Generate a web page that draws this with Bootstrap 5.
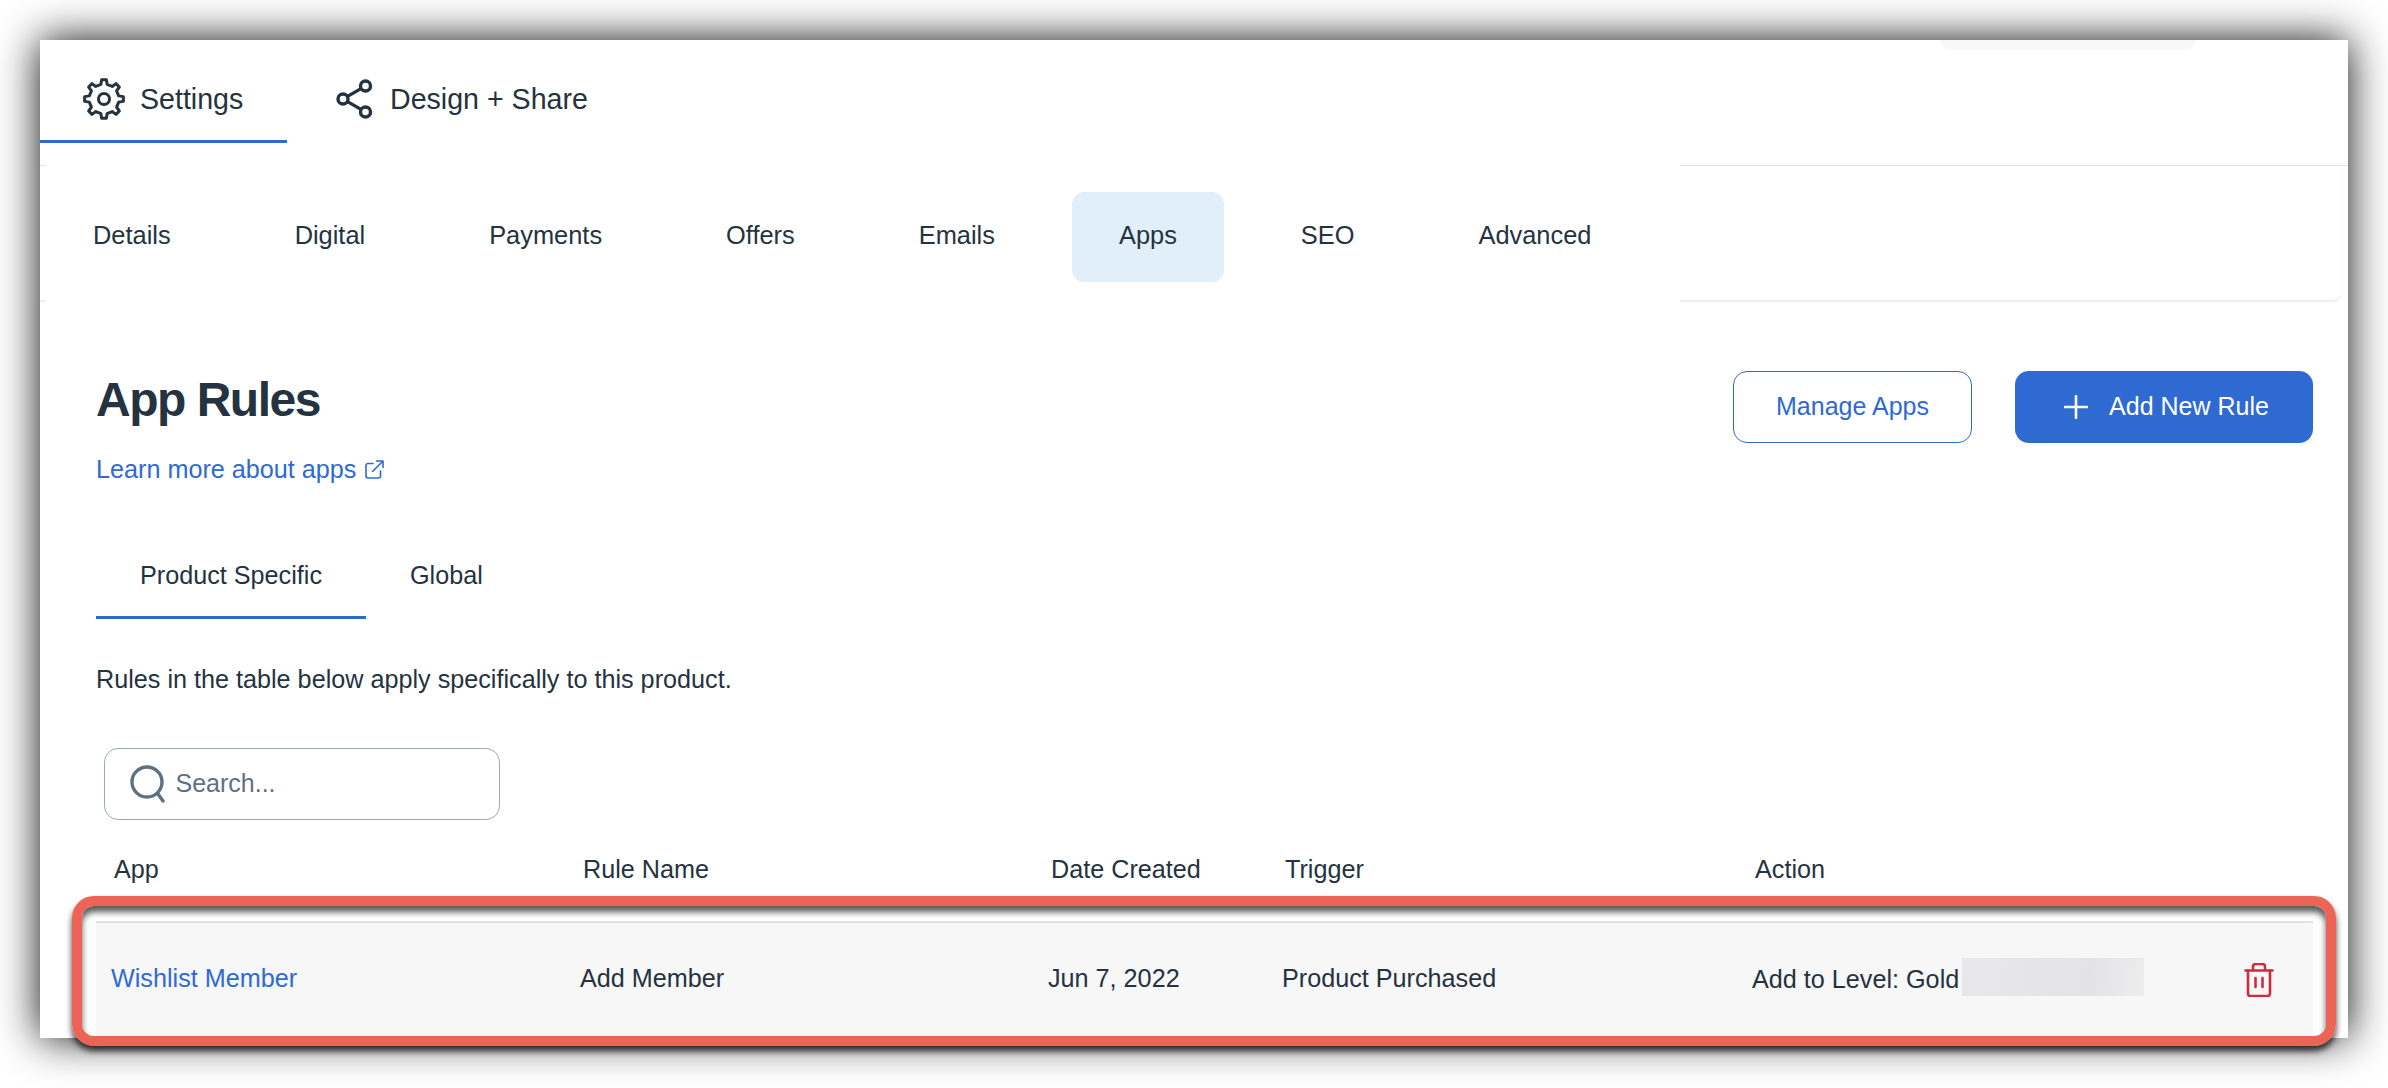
<!DOCTYPE html>
<html lang="en">
<head>
  <meta charset="UTF-8" />
  <title>App Rules</title>
  <link href="https://cdn.jsdelivr.net/npm/bootstrap@5.3.0/dist/css/bootstrap.min.css" rel="stylesheet">
  <style>
    html, body {
      height: 1088px;
      overflow: hidden;
      background: #fff;
    }

    body {
      font-family: "Liberation Sans", Arial, sans-serif;
      font-size: 25.2px;
      color: #25323f;
    }

    a {
      color: #2f69d2;
      text-decoration: none;
    }

    .app-window {
      position: relative;
      width: 2308px;
      height: 998px;
      margin: 40px;
      background: #fff;
      box-shadow: 0 0 40px rgba(0, 0, 0, 0.95);
    }

    .peek-menu {
      position: absolute;
      top: 0;
      left: 1900px;
      width: 256px;
      height: 10px;
      background: #f7f8f9;
      border-radius: 0 0 12px 12px;
    }

    .top-tabs {
      height: 126px;
      border-bottom: 1px solid #e2e4e8;
    }

    .top-tab {
      height: 103px;
      padding-top: 17px;
      font-size: 28.6px;
      color: #25323f;
      border-bottom: 3px solid transparent;
    }

    .top-tab span {
      padding-top: 2px;
    }

    .top-tab.is-active {
      width: 247px;
      padding-left: 43px;
      gap: 15px;
      border-bottom-color: #2f69d2;
    }

    .top-tab.is-plain {
      margin-left: 49px;
      gap: 17px;
    }

    .sub-card {
      height: 135px;
      margin-right: 6px;
      border-bottom-right-radius: 10px;
      box-shadow: 0 2px 2px rgba(0, 0, 0, 0.08);
    }

    .sub-tabs {
      position: relative;
      width: 1634px;
      height: 150px;
      margin: -1px 0 0 6px;
      padding-top: 27px;
      gap: 30px;
      background: #fff;
    }

    .sub-link {
      height: 90px;
      padding: 0 47px 4px;
      font-size: 25.4px;
      line-height: 86px;
      color: #25323f;
      border-radius: 12px;
    }

    .sub-link.is-active {
      background: #e1effb;
    }

    .main-pane {
      padding: 71px 35px 0 56px;
    }

    .page-title {
      margin: 0;
      font-family: "Liberation Sans", Arial, sans-serif;
      font-size: 48px;
      font-weight: 700;
      line-height: 58px;
      letter-spacing: -1.5px;
    }

    .learn-link {
      display: inline-flex;
      align-items: center;
      gap: 9px;
      margin-top: 24px;
      line-height: 32px;
    }

    .act-btn {
      height: 72px;
      padding: 0;
      font-size: 25px;
      border-radius: 14px;
    }

    .btn-manage {
      width: 239px;
      color: #2f69d2;
      background: #fff;
      border: 1.5px solid #2f69d2;
    }

    .btn-add {
      width: 298px;
      margin-left: 43px;
      padding-left: 5px;
      gap: 21px;
      color: #fff;
      background: #2f69d2;
      border: 0;
    }

    .scope-tabs {
      margin-top: 70px;
    }

    .scope-tab {
      padding: 0 44px 25px;
      line-height: 32px;
      color: #25323f;
      border-bottom: 3px solid transparent;
    }

    .scope-tab.is-active {
      border-bottom-color: #2f69d2;
    }

    .scope-note {
      margin: 44px 0 0;
      line-height: 32px;
    }

    .search-box {
      width: 396px;
      height: 72px;
      margin: 53px 0 0 7.500px;
      padding-left: 25px;
      gap: 9px;
      border: 1.5px solid #9aa9b7;
      border-radius: 14px;
    }

    .search-input {
      width: 300px;
      padding: 0;
      font-size: 25px;
      border: 0;
      outline: 0;
      color: #25323f;
    }

    .search-input::placeholder {
      color: #5f7080;
      opacity: 1;
    }

    .rule-table {
      width: 2217px;
      margin: 0;
      table-layout: fixed;
      --bs-table-color: #25323f;
      color: #25323f;
    }

    .rule-table th {
      height: 102px;
      padding: 0 0 1px 18px;
      font-weight: 400;
      vertical-align: middle;
      border: 0;
      background: transparent;
    }

    .rule-table td {
      height: 115px;
      padding: 0 0 2px 15px;
      vertical-align: middle;
      background: #f7f7f8;
      border: 0;
      border-top: 2px solid #e2e3e6;
    }

    .rule-table td.trash-cell {
      padding-left: 43px;
    }

    .blur-patch {
      display: inline-block;
      width: 182px;
      height: 38px;
      margin-left: 3px;
      vertical-align: -8px;
      background: linear-gradient(100deg, #e8e7e9, #e3e2e4 70%, #eeedee);
    }

    .callout-frame {
      position: absolute;
      left: 32px;
      top: 856px;
      width: 2264px;
      height: 150px;
      border: 10px solid #ec6455;
      border-radius: 22px;
      box-shadow: 0 5px 6px rgba(0, 0, 0, 0.75), inset 0 6px 6px rgba(0, 0, 0, 0.65);
      pointer-events: none;
    }
  </style>
</head>
<body>
  <div class="app-window">
    <div class="peek-menu"></div>

    <div class="top-tabs d-flex align-items-start">
      <a href="#" class="top-tab is-active d-flex align-items-center">
        <svg width="42" height="42" viewBox="0 0 42 42" fill="none" stroke="#25323f" stroke-width="3" stroke-linejoin="round">
          <polygon points="17.88,6.33 18.62,1.65 23.38,1.65 24.12,6.33 29.17,8.42 33,5.63 36.37,9 33.58,12.83 35.67,17.88 40.35,18.62 40.35,23.38 35.67,24.12 33.58,29.17 36.37,33 33,36.37 29.17,33.58 24.12,35.67 23.38,40.35 18.62,40.35 17.88,35.67 12.83,33.58 9,36.37 5.63,33 8.42,29.17 6.33,24.12 1.65,23.38 1.65,18.62 6.33,17.88 8.42,12.83 5.63,9 9,5.63 12.83,8.42"/>
          <circle cx="21" cy="21" r="5.5"/>
        </svg>
        <span>Settings</span>
      </a>
      <a href="#" class="top-tab is-plain d-flex align-items-center">
        <svg width="37" height="40" viewBox="0 0 37 40" fill="none" stroke="#25323f" stroke-width="3.4">
          <circle cx="7" cy="20" r="5"/>
          <circle cx="29.5" cy="7" r="5"/>
          <circle cx="29.5" cy="33" r="5"/>
          <path d="M11.5 17.4 25 9.6M11.5 22.6 25 30.4"/>
        </svg>
        <span>Design + Share</span>
      </a>
    </div>

    <div class="sub-card">
      <nav class="sub-tabs d-flex align-items-start">
        <a href="#" class="sub-link">Details</a>
        <a href="#" class="sub-link">Digital</a>
        <a href="#" class="sub-link">Payments</a>
        <a href="#" class="sub-link">Offers</a>
        <a href="#" class="sub-link">Emails</a>
        <a href="#" class="sub-link is-active">Apps</a>
        <a href="#" class="sub-link">SEO</a>
        <a href="#" class="sub-link">Advanced</a>
      </nav>
    </div>

    <div class="main-pane">
      <div class="d-flex justify-content-between align-items-start">
        <div>
          <h1 class="page-title">App Rules</h1>
          <a href="#" class="learn-link">
            <span>Learn more about apps</span>
            <svg width="19" height="19" viewBox="0 0 19 19" fill="none" stroke="#2f69d2" stroke-width="1.6" stroke-linecap="round" stroke-linejoin="round">
              <path d="M8 3.5H3A2 2 0 0 0 1 5.500V16A2 2 0 0 0 3 18H13.500A2 2 0 0 0 15.500 16V11"/>
              <path d="M7.500 11.500 17.500 1.500M11.500 1H18V7.500"/>
            </svg>
          </a>
        </div>
        <div class="d-flex">
          <button type="button" class="act-btn btn-manage">Manage Apps</button>
          <button type="button" class="act-btn btn-add d-flex align-items-center justify-content-center">
            <svg width="24" height="24" viewBox="0 0 24 24" fill="none" stroke="#fff" stroke-width="2.6" stroke-linecap="round">
              <path d="M12 1V23M1 12H23"/>
            </svg>
            <span>Add New Rule</span>
          </button>
        </div>
      </div>

      <div class="scope-tabs d-flex">
        <a href="#" class="scope-tab is-active">Product Specific</a>
        <a href="#" class="scope-tab">Global</a>
      </div>

      <p class="scope-note">Rules in the table below apply specifically to this product.</p>

      <div class="search-box d-flex align-items-center">
        <svg width="37" height="38" viewBox="0 0 37 38" fill="none" stroke="#5f7080" stroke-width="3.4" stroke-linecap="round">
          <circle cx="17" cy="17" r="15"/>
          <path d="M28 29 33 36"/>
        </svg>
        <input type="text" class="search-input" placeholder="Search...">
      </div>

      <table class="table rule-table">
        <colgroup>
          <col style="width: 469px">
          <col style="width: 468px">
          <col style="width: 234px">
          <col style="width: 470px">
          <col>
          <col style="width: 112px">
        </colgroup>
        <thead>
          <tr>
            <th>App</th>
            <th>Rule Name</th>
            <th>Date Created</th>
            <th>Trigger</th>
            <th>Action</th>
            <th></th>
          </tr>
        </thead>
        <tbody>
          <tr>
            <td><a href="#">Wishlist Member</a></td>
            <td>Add Member</td>
            <td>Jun 7, 2022</td>
            <td>Product Purchased</td>
            <td>Add to Level: Gold<span class="blur-patch"></span></td>
            <td class="trash-cell">
              <svg width="30" height="34" viewBox="0 0 30 34" fill="none" stroke="#cd2c40" stroke-width="2.6" stroke-linecap="round" stroke-linejoin="round">
                <path d="M1.500 7.500H28.500"/>
                <path d="M9 7V3.500A2.500 2.500 0 0 1 11.500 1H18.500A2.500 2.500 0 0 1 21 3.500V7"/>
                <path d="M4 7.500V30.500A2.500 2.500 0 0 0 6.500 33H23.500A2.500 2.500 0 0 0 26 30.500V7.500"/>
                <path d="M11.500 15V24M18.500 15V24"/>
              </svg>
            </td>
          </tr>
        </tbody>
      </table>
    </div>

    <div class="callout-frame"></div>
  </div>

  <script src="https://cdn.jsdelivr.net/npm/bootstrap@5.3.0/dist/js/bootstrap.bundle.min.js"></script>
</body>
</html>
